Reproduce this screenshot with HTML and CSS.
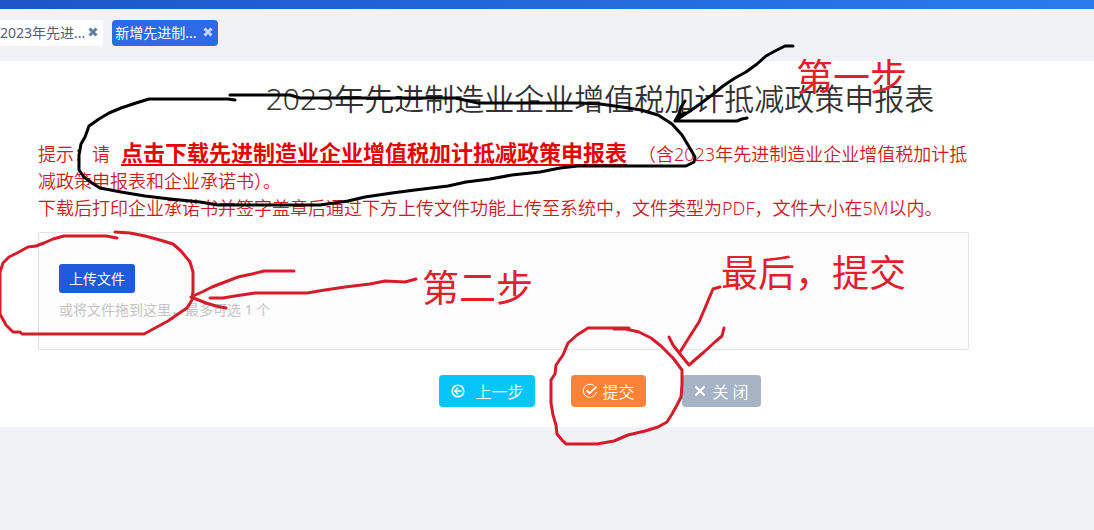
FILE: index.html
```
<!DOCTYPE html>
<html lang="zh-CN">

<head>
    <meta charset="UTF-8">
    <meta name="viewport" content="width=device-width, initial-scale=1.0">
    <title>2023年先进制造业企业增值税加计抵减政策申报表</title>
    <link rel="stylesheet" href="styles.css">
</head>

<body>
    <header class="topbar"></header>

    <nav class="tabs">
        <div class="tab">
            <a href="#">2023年先进...</a>
            <button type="button" class="tab-close" aria-label="关闭标签">
                <svg viewBox="0 0 10 10"><path d="M1.5 1.5l7 7M8.5 1.5l-7 7"/></svg>
            </button>
        </div>
        <div class="tab active">
            <a href="#">新增先进制...</a>
            <button type="button" class="tab-close" aria-label="关闭标签">
                <svg viewBox="0 0 10 10"><path d="M1.5 1.5l7 7M8.5 1.5l-7 7"/></svg>
            </button>
        </div>
    </nav>

    <main class="content">
        <h1>2023年先进制造业企业增值税加计抵减政策申报表</h1>

        <div class="tips">
            <p>提示：请<a href="#" class="download">点击下载先进制造业企业增值税加计抵减政策申报表</a>（含2023年先进制造业企业增值税加计抵减政策申报表和企业承诺书）。</p>
            <p>下载后打印企业承诺书并签字盖章后通过下方上传文件功能上传至系统中，文件类型为PDF，文件大小在5M以内。</p>
        </div>

        <div class="upload">
            <button type="button" class="upload-btn">上传文件</button>
            <p>或将文件拖到这里，最多可选 1 个</p>
        </div>

        <div class="actions">
            <button type="button" class="btn btn-prev">
                <svg viewBox="0 0 14 14"><circle cx="7" cy="7" r="5.8"/><path d="M10.5 7H4M7 3.8L3.8 7L7 10.2"/></svg>
                上一步
            </button>
            <button type="button" class="btn btn-submit">
                <svg viewBox="0 0 16 16"><path d="M12.2 2.8A6.6 6.6 0 1 0 14.4 9"/><path d="M4.6 7.4L7.6 10.2L14.6 3.6" stroke-width="1.8"/></svg>
                提交
            </button>
            <button type="button" class="btn btn-close">
                <svg viewBox="0 0 12 12"><path d="M1.5 1.5l9 9M10.5 1.5l-9 9" stroke-width="2"/></svg>
                关 闭
            </button>
        </div>
    </main>

    <!-- 操作步骤标注 -->
    <svg class="marks" width="1094" height="530" viewBox="0 0 1094 530">
        <g class="pen-black">
            <path d="M235 100L228 99H149L136 103L121 108L109 113L99 119L89 126L85 137L81 144L79 155V170L84 177L92 183L100 188L121 192L145 196L170 199L200 202L218 205H320L334 203L348 201L365 197L392 193L415 190L448 186L466 182L490 179L512 175L540 172L560 168L578 166H686L694 162L695 157L688 145L682 135L672 124L658 115L641 110L622 107L600 104L580 103H478L455 98H300L290 95H230"/>
            <path d="M793 46H785L775 51L766 56L757 64L746 72L735 78L723 86L712 95L700 104L690 111L675 121L679 114L681 107L685 101M675 121H737L742 119L747 118M677 119L680 115L685 113"/>
        </g>
        <g class="pen-red">
            <path d="M117 238L106 236H64L53 239L44 243L36 246L28 247L17 253L9 257L3 263L0 272V314L6 325L13 332L20 332L22 334H144L155 328L168 321L178 314L187 308L192 300L193 291V272L190 262L181 251L173 244L160 240L145 236L130 233L115 232"/>
            <path d="M294 271H264L252 274L238 277L225 282L212 287L202 292L191 297L206 303L216 306L226 308"/>
            <path d="M210 298H223L235 296L255 293H307L325 290L345 287L370 284L385 281L405 282L416 279"/>
            <path d="M629 328H588L577 335L568 343L563 355L556 365L555 374L551 380V403L553 415L556 425L557 434L562 440L566 444H597L614 441L628 435L645 431L658 427L667 422L672 414L677 405L681 397L682 384V370L673 358L661 346L651 338L639 332L626 329H614"/>
            <path d="M720 287L713 289L710 296L705 308L699 322L690 336L680 352M669 337L673 345L680 354L689 365L704 352L716 341L722 336L724 328"/>
        </g>
        <g class="notes">
            <text x="796" y="91">第一步</text>
            <text x="422" y="302">第二步</text>
            <text x="721" y="287">最后，提交</text>
        </g>
    </svg>
</body>

</html>
```

FILE: styles.css
```
* {
    box-sizing: border-box;
}

body {
    margin: 0;
    min-height: 100vh;
    background-color: #f0f2f5;
    font-family: "Noto Sans", "Noto Sans CJK SC", sans-serif;
    font-size: 14px;
    color: #333;
    overflow-x: hidden;
}

h1,
p {
    margin: 0;
}

button {
    font-family: inherit;
    border: none;
    cursor: pointer;
}

svg {
    fill: none;
    stroke: currentColor;
}

.topbar {
    height: 9px;
    background: linear-gradient(90deg, #1c56c6, #2b7bec);
}

.tabs {
    display: flex;
    gap: 9px;
    padding: 11px 0 15px;
}

.tab {
    display: flex;
    align-items: center;
    gap: 3px;
    height: 26px;
    padding: 0 5px 2px 0;
    border-radius: 0 4px 4px 0;
    background-color: #fff;
    color: #4c6180;
}

.tab a {
    color: inherit;
    text-decoration: none;
}

.tab.active {
    gap: 6px;
    padding-left: 3px;
    border-radius: 4px;
    background-color: #2d6ae8;
    color: #fff;
}

.tab-close {
    display: flex;
    padding: 0;
    background: none;
    color: #5f7ea5;
}

.active .tab-close {
    color: #c3d5fa;
}

.tab-close svg {
    width: 10px;
    height: 10px;
    stroke-width: 3;
}

.content {
    padding: 16px 125px 20px 38px;
    background-color: #fff;
}

h1 {
    margin: 0 -125px 0 68px;
    font-size: 30px;
    font-weight: 350;
    line-height: 44px;
    text-align: center;
}

.tips {
    margin-top: 18px;
    font-size: 18px;
    font-weight: 350;
    line-height: 27px;
    color: #cc1a22;
}

.download {
    margin: 0 11px;
    font-size: 22px;
    font-weight: 700;
    color: #e60000;
    text-underline-offset: 3px;
}

.upload {
    margin-top: 10px;
    padding: 31px 20px 29px;
    border: 1px solid #e2e2e2;
    border-radius: 2px;
    background-color: #fcfcfc;
    color: #c4c4c4;
}

.upload p {
    margin-top: 7px;
    line-height: 20px;
}

.upload-btn {
    display: block;
    height: 29px;
    padding: 0 10px 2px;
    border-radius: 3px;
    background-color: #1e5bdb;
    font-size: 14px;
    color: #fff;
}

.actions {
    display: flex;
    justify-content: center;
    gap: 36px;
    margin: 25px -125px 0 68px;
}

.btn {
    display: flex;
    align-items: center;
    gap: 4px;
    height: 32px;
    padding: 0 12px;
    border-radius: 4px;
    font-size: 16px;
    font-weight: 350;
    color: #fff;
}

.btn svg {
    width: 16px;
    height: 16px;
    stroke-width: 1;
}

.btn-prev {
    gap: 10px;
    background-color: #05c5fb;
}

.btn-prev svg {
    width: 14px;
    height: 14px;
    stroke-width: 1.5;
}

.btn-submit {
    background-color: #fd8136;
}

.btn-submit svg {
    margin-left: -1px;
}

.btn-close {
    gap: 6px;
    background-color: #a6b4c6;
}

.btn-close svg {
    width: 12px;
    height: 12px;
}

.marks {
    position: absolute;
    top: 0;
    left: 0;
    pointer-events: none;
    stroke-width: 3;
    stroke-linecap: round;
    stroke-linejoin: round;
}

.pen-black {
    stroke: #000;
}

.pen-red {
    stroke: #d41c2a;
}

.notes {
    fill: #e0202a;
    stroke: none;
    font-size: 37px;
}
```
